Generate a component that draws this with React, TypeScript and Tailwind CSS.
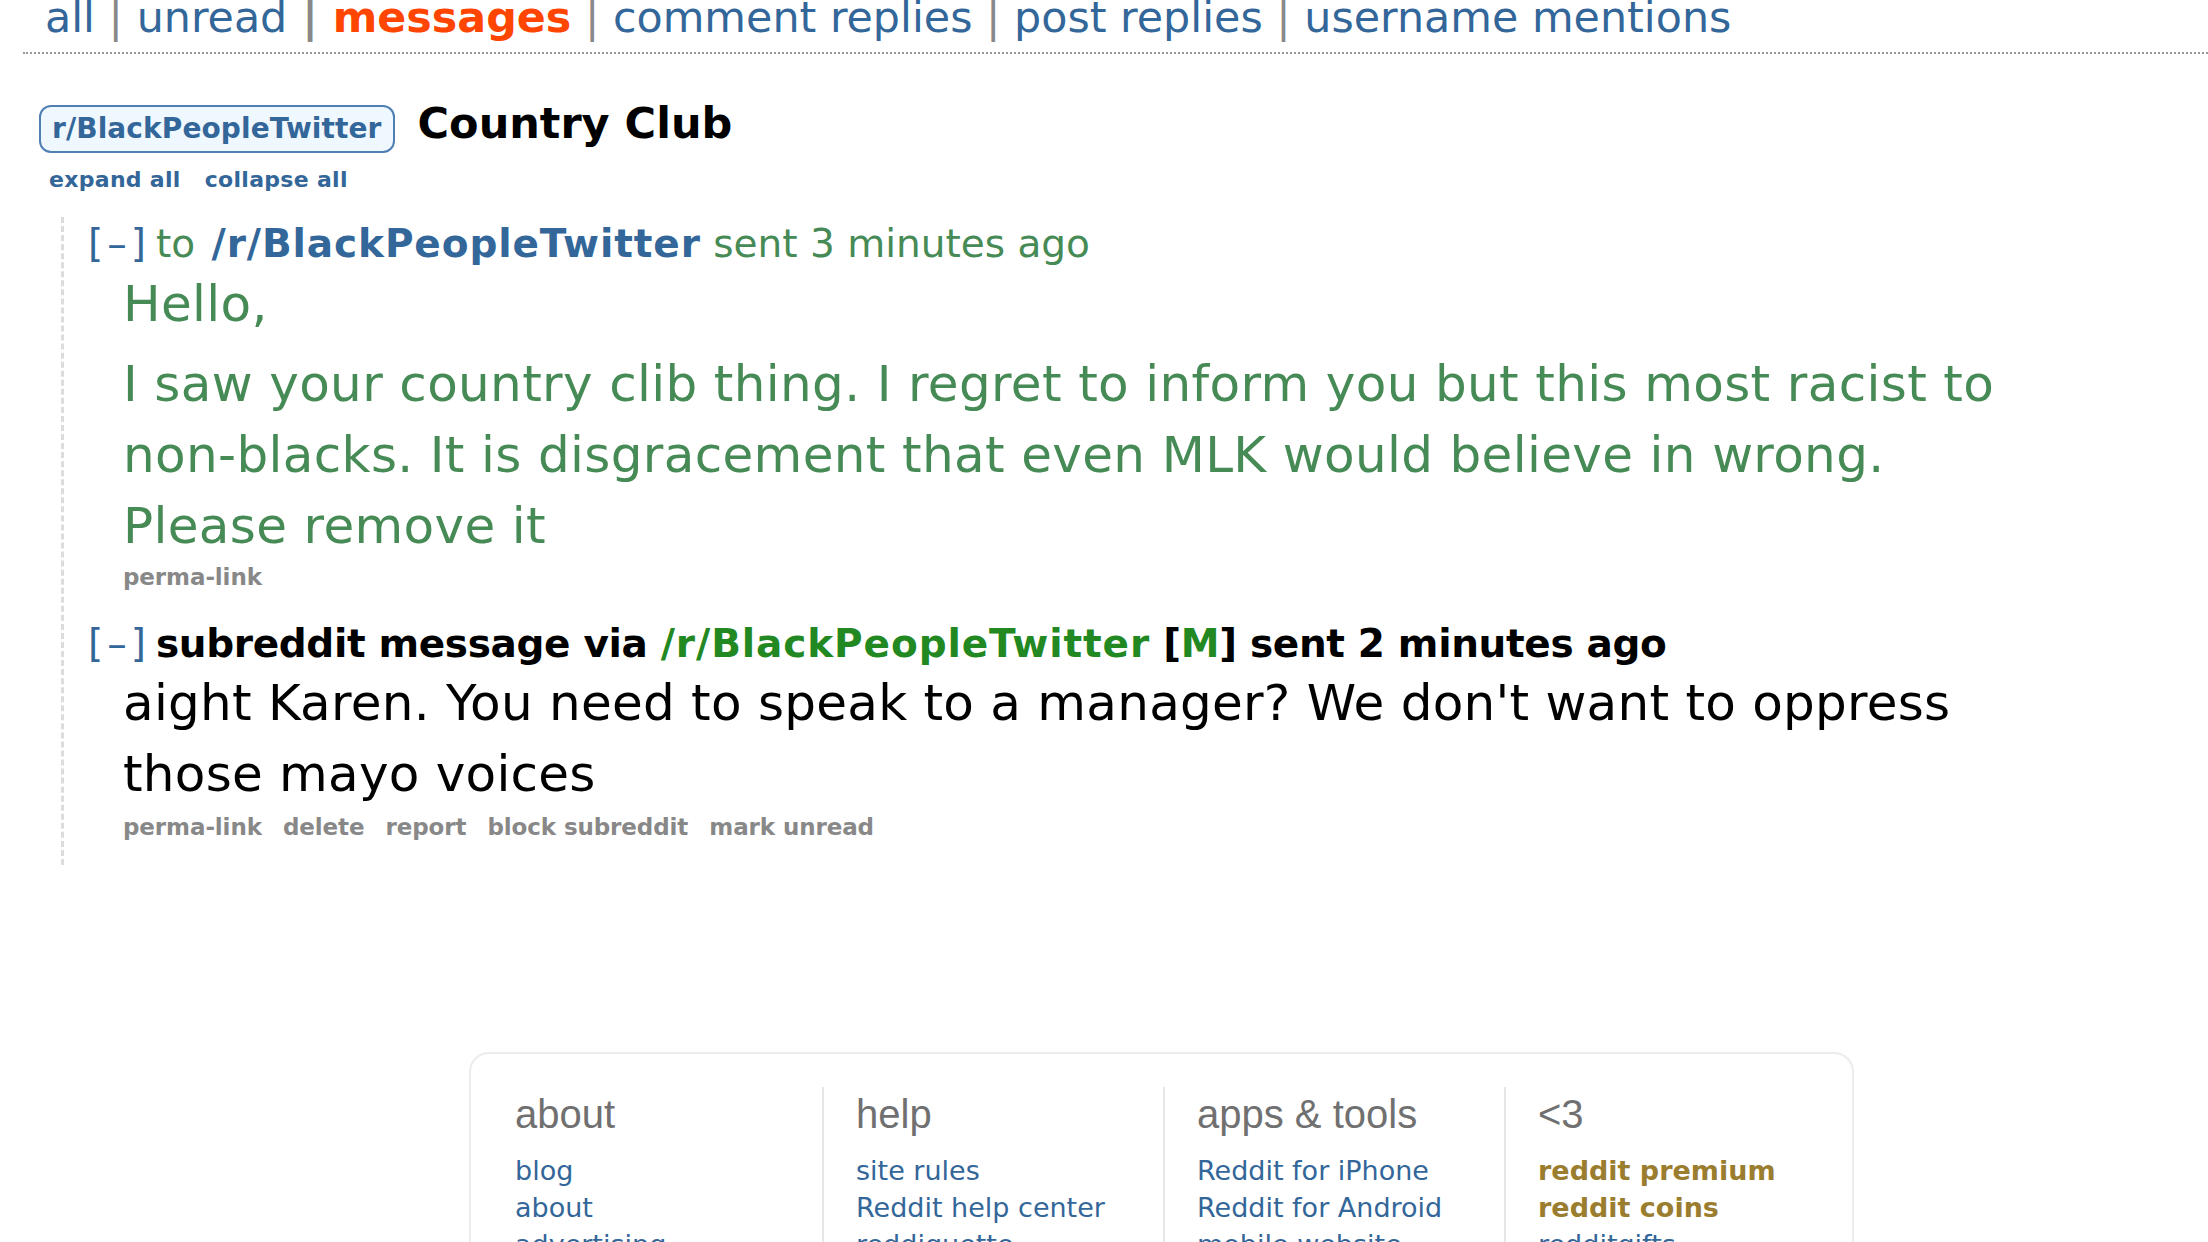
const tabs = [
  { label: "all" },
  { label: "unread" },
  { label: "messages", selected: true },
  { label: "comment replies" },
  { label: "post replies" },
  { label: "username mentions" },
];

const footer = [
  { title: "about", links: ["blog", "about", "advertising", "careers"] },
  {
    title: "help",
    links: ["site rules", "Reddit help center", "reddiquette", "mod guidelines", "contact us"],
  },
  { title: "apps & tools", links: ["Reddit for iPhone", "Reddit for Android", "mobile website"] },
  { title: "<3", links: ["reddit premium", "reddit coins", "redditgifts"], gold: 2 },
];

function Tabs() {
  return (
    <div className="ml-[23px] border-b-2 border-dotted border-[#9a9a9a] pb-[10px] pl-[22px]">
      <div className="-mt-[8px] whitespace-pre text-[42.8px] leading-[50px] text-[#336699]">
        {tabs.map((t, i) => (
          <span key={t.label} className={t.selected ? "font-bold" : ""}>
            {i > 0 && <span className="text-[#888]"> | </span>}
            <a href="#" className={t.selected ? "text-[#ff4500]" : ""}>
              {t.label}
            </a>
          </span>
        ))}
      </div>
    </div>
  );
}

function Buttons({ items }: { items: string[] }) {
  return (
    <ul className="flex gap-[21px] text-[23px] font-bold leading-[30px] tracking-[-0.1px] text-[#888]">
      {items.map((b) => (
        <li key={b}>
          <a href="#">{b}</a>
        </li>
      ))}
    </ul>
  );
}

function Collapse() {
  return <span className="mr-[6px] tracking-[4px] text-[#336699]">[–]</span>;
}

export default function App() {
  return (
    <div className="min-h-screen overflow-hidden bg-white font-['DejaVu_Sans',Verdana,sans-serif] text-black">
      <Tabs />

      <div className="ml-[39px] mt-[45px] flex items-baseline">
        <a
          href="#"
          className="flex h-[48px] items-center rounded-[12px] border-2 border-[#4f7fb3] bg-[#eff7ff] px-[11px] text-[28px] font-bold leading-[44px] tracking-[0.1px] text-[#336699]"
        >
          r/BlackPeopleTwitter
        </a>
        <h1 className="ml-[23px] text-[43px] font-bold leading-[48px]">Country Club</h1>
      </div>

      <div className="ml-[49px] mt-[12px] flex gap-[24px] text-[22px] font-bold leading-[30px] tracking-[0.3px] text-[#336699]">
        <a href="#">expand all</a>
        <a href="#">collapse all</a>
      </div>

      <div className="ml-[61px] mt-[22px] border-l-[3px] border-dashed border-[#dcdcdc] pb-[23px] pl-[24px] pt-[3px]">
        {/* sent message */}
        <div>
          <p className="whitespace-nowrap text-[39px] leading-[47px] text-[#468a55]">
            <Collapse />
            to{" "}
            <a href="#" className="ml-[4px] font-bold tracking-[0.9px] text-[#336699]">
              /r/BlackPeopleTwitter
            </a>{" "}
            sent 3 minutes ago
          </p>
          <div className="ml-[35px] mt-[2px]">
            <div className="text-[50px] leading-[71px] tracking-[0.35px] text-[#468a55]">
              <p>Hello,</p>
              <p className="mt-[9px] whitespace-nowrap">
                I saw your country clib thing. I regret to inform you but this most racist to
                <br />
                non-blacks. It is disgracement that even MLK would believe in wrong.
                <br />
                Please remove it
              </p>
            </div>
            <Buttons items={["perma-link"]} />
          </div>
        </div>

        {/* mod reply */}
        <div className="mt-[28px]">
          <p className="whitespace-nowrap text-[39px] leading-[47px]">
            <Collapse />
            <span className="font-bold tracking-[-0.35px]">
              subreddit message via{" "}
              <a href="#" className="tracking-[0.9px] text-[#228822]">
                /r/BlackPeopleTwitter
              </a>{" "}
              [<span className="text-[#228822]">M</span>] sent 2 minutes ago
            </span>
          </p>
          <div className="ml-[35px] mt-[1px]">
            <p className="whitespace-nowrap text-[50px] leading-[71px] tracking-[0.25px]">
              aight Karen. You need to speak to a manager? We don't want to oppress
              <br />
              those mayo voices
            </p>
            <div className="mt-[2px]">
              <Buttons items={["perma-link", "delete", "report", "block subreddit", "mark unread"]} />
            </div>
          </div>
        </div>
      </div>

      <div className="ml-[469px] mt-[187px] flex w-[1385px] rounded-[20px] border-2 border-[#ececec] px-[10px] pb-[40px] pt-[33px]">
        {footer.map((col, i) => (
          <div
            key={col.title}
            className={
              i === 0
                ? "w-[341px] pl-[34px] pt-[4px]"
                : i === 3
                  ? "flex-1 border-l-2 border-[#e6e6e6] pl-[32px] pt-[4px]"
                  : "w-[341px] border-l-2 border-[#e6e6e6] pl-[32px] pt-[4px]"
            }
          >
            <h2 className="font-['Liberation_Sans',Arial,sans-serif] text-[40px] leading-[46px] text-[#707070]">
              {col.title}
            </h2>
            <ul className="mt-[15px] text-[27px] leading-[37px]">
              {col.links.map((l, j) => (
                <li key={l}>
                  <a
                    href="#"
                    className={
                      col.gold && j < col.gold ? "font-bold text-[#9a7d2e]" : "text-[#336699]"
                    }
                  >
                    {l}
                  </a>
                </li>
              ))}
            </ul>
          </div>
        ))}
      </div>
    </div>
  );
}
